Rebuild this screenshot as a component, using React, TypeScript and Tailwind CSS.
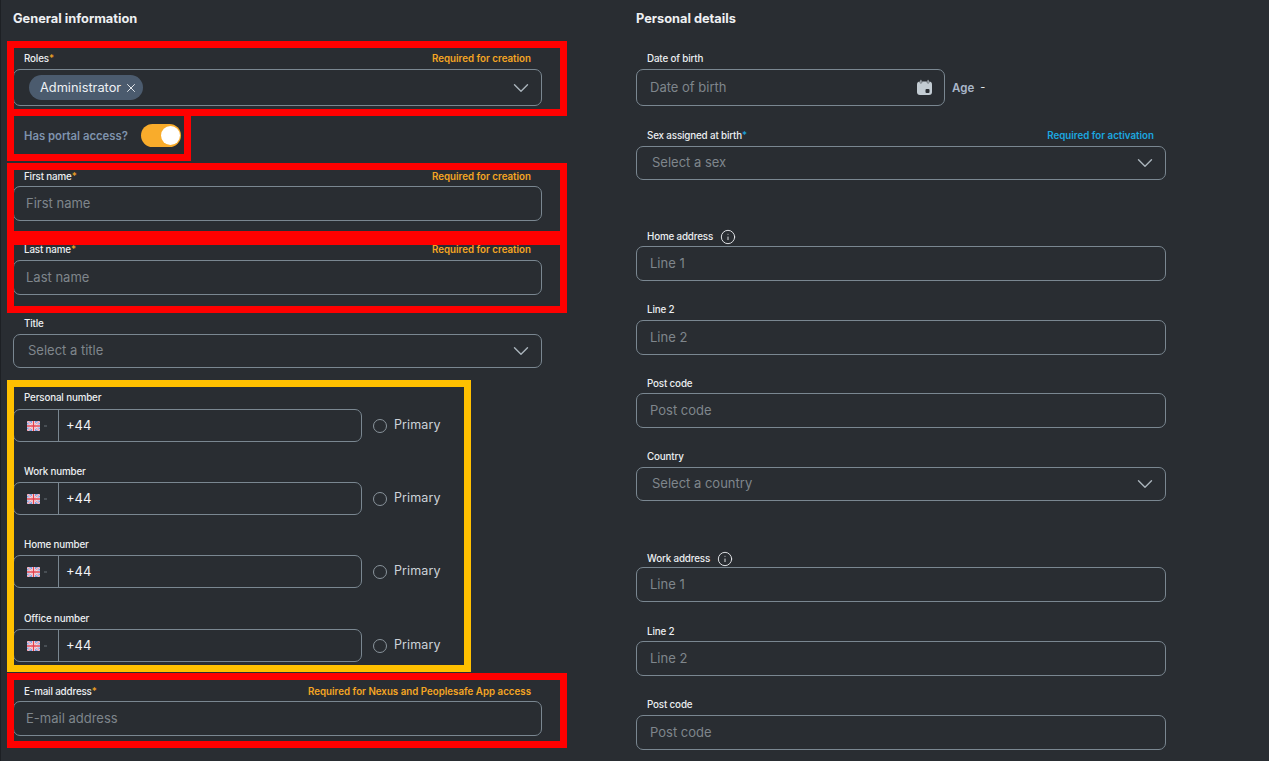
import React from "react";
import { ChevronDown, X, Info } from "lucide-react";

const FONT = "font-['Inter','Roboto',sans-serif]";

function UkFlag() {
  return (
    <svg width="13" height="10" viewBox="0 0 26 20" className="block">
      <rect width="26" height="20" fill="#7f9de0" />
      <path d="M0 0L26 20M26 0L0 20" stroke="#f6e4ea" strokeWidth="4" />
      <path d="M0 0L26 20M26 0L0 20" stroke="#e0667a" strokeWidth="1.5" />
      <path d="M13 0V20M0 10H26" stroke="#fbf0f2" strokeWidth="6" />
      <path d="M13 0V20M0 10H26" stroke="#e2404f" strokeWidth="3" />
    </svg>
  );
}

function Label({
  text,
  star,
  hint,
  hintColor = "orange",
  icon,
  shift = "",
  right,
}: {
  text: string;
  star?: "orange" | "blue";
  hint?: string;
  hintColor?: "orange" | "blue";
  icon?: boolean;
  shift?: string;
  right?: boolean;
}) {
  return (
    <div className={`flex h-4 items-center justify-between pl-[11px] mb-[3px] ${right ? "pr-[12px]" : "pr-[11px]"} ${shift}`}>
      <span className="translate-y-px flex items-center text-[9.8px] leading-4 font-medium text-[#eceff1] tracking-[-0.15px]">
        {text}
        {star === "orange" && <span className="text-[#f5a623]">*</span>}
        {star === "blue" && <span className="text-[#1ba8e0]">*</span>}
        {icon && <Info className="ml-[7px] w-[16px] h-[16px] text-[#e8ebee]" strokeWidth={1.4} />}
      </span>
      {hint && (
        <span
          className={
            hintColor === "orange"
              ? "translate-y-px text-[9.75px] leading-4 font-semibold text-[#f5a623]"
              : "translate-y-px text-[9.75px] leading-4 font-semibold text-[#1ba8e0]"
          }
        >
          {hint}
        </span>
      )}
    </div>
  );
}

function Input({ placeholder, left }: { placeholder: string; left?: boolean }) {
  return (
    <div
      className={`h-[35px] rounded-[7px] border border-[#7a8791] flex items-center text-[13px] text-[#7f868c] ${left ? "pl-[12px]" : "pl-[13px]"}`}
    >
      {placeholder}
    </div>
  );
}

function Select({ placeholder, left }: { placeholder: string; left?: boolean }) {
  return (
    <div
      className={`h-[34px] rounded-[7px] border border-[#7a8791] flex items-center justify-between pr-[7px] text-[13px] text-[#7f868c] ${left ? "pl-[14px]" : "pl-[15px]"}`}
    >
      {placeholder}
      <ChevronDown className="w-[26px] h-[26px] text-[#aab4bc]" strokeWidth={1.3} />
    </div>
  );
}

function Phone({ label, mt, shift }: { label: string; mt: string; shift?: string }) {
  return (
    <div className={mt}>
      <Label text={label} shift={shift} />
      <div className="flex items-center">
        <div className="h-[33px] w-[349px] rounded-[7px] border border-[#7a8791] flex items-center">
          <div className="w-[45px] h-full border-r border-[#7a8791] flex items-center pl-[13px] gap-[4px]">
            <UkFlag />
            <span className="w-[3px] h-[2px] bg-[#484e54]" />
          </div>
          <span className="pl-[7px] text-[13px] text-[#f2f4f6]">+44</span>
        </div>
        <span className="ml-[11px] w-[14px] h-[14px] rounded-full border border-[#8a949c]" />
        <span className="ml-[7px] text-[12.5px] text-[#cdd3d9] tracking-[0.1px]">Primary</span>
      </div>
    </div>
  );
}

function Calendar() {
  return (
    <svg width="17" height="17" viewBox="0 0 17 17" className="block">
      <rect x="1" y="2.5" width="15" height="13.5" rx="3" fill="#c3ccd3" />
      <rect x="4" y="0.8" width="1.8" height="3.5" rx="0.9" fill="#c3ccd3" stroke="#292d32" strokeWidth="0.5" />
      <rect x="11.2" y="0.8" width="1.8" height="3.5" rx="0.9" fill="#c3ccd3" stroke="#292d32" strokeWidth="0.5" />
      <rect x="9.5" y="10" width="4" height="4" rx="1" fill="#292d32" />
    </svg>
  );
}

export default function App() {
  return (
    <div
      className={`${FONT} relative w-[1269px] h-[761px] overflow-hidden bg-[#292d32] border-l border-[#1d2024]`}
    >
      <div className="flex">
        {/* Left column */}
        <div className="ml-[12px] w-[529px] pt-[10px]">
          <h2 className="h-4 translate-y-[1px] flex items-center text-[12.8px] font-bold text-[#eef0f2]">General information</h2>

          <div className="mt-[24px]">
            <Label text="Roles" star="orange" hint="Required for creation" />
            <div className="h-[37px] rounded-[7px] border border-[#7a8791] flex items-center justify-between pl-[15px] pr-[7px]">
              <span className="h-[25px] rounded-full bg-[#4b5b6e] flex items-center pl-[11px] pr-[5px] text-[12.8px] text-[#eef1f4]">
                Administrator
                <X className="ml-[3px] w-[14px] h-[14px]" strokeWidth={1.6} />
              </span>
              <ChevronDown className="w-[26px] h-[26px] text-[#aab4bc]" strokeWidth={1.3} />
            </div>
          </div>

          <div className="mt-[17px] h-6 flex items-center pl-[11px]">
            <span className="translate-y-px text-[11.3px] font-semibold text-[#7f93ad]">Has portal access?</span>
            <span className="ml-[13px] w-[40px] h-[23px] rounded-full bg-[#f9ac2b] flex items-center justify-end pr-[1px]">
              <span className="w-[19px] h-[19px] rounded-full bg-white" />
            </span>
          </div>

          <div className="mt-[20px]">
            <Label text="First name" star="orange" hint="Required for creation" shift="translate-y-px" />
            <Input placeholder="First name" left />
          </div>
          <div className="mt-[20px]">
            <Label text="Last name" star="orange" hint="Required for creation" />
            <Input placeholder="Last name" left />
          </div>
          <div className="mt-[20px]">
            <Label text="Title" />
            <Select placeholder="Select a title" left />
          </div>

          <Phone label="Personal number" mt="mt-[22px]" shift="-translate-y-px" />
          <Phone label="Work number" mt="mt-[21px]" />
          <Phone label="Home number" mt="mt-[21px]" />
          <Phone label="Office number" mt="mt-[22px]" />

          <div className="mt-[20px]">
            <Label text="E-mail address" star="orange" hint="Required for Nexus and Peoplesafe App access" shift="translate-y-px" />
            <Input placeholder="E-mail address" left />
          </div>
        </div>

        {/* Right column */}
        <div className="ml-[94px] w-[530px] pt-[10px]">
          <h2 className="h-4 translate-y-[1px] flex items-center text-[12.8px] font-bold text-[#eef0f2]">Personal details</h2>

          <div className="mt-[24px]">
            <Label text="Date of birth" right />
            <div className="flex items-center">
              <div className="h-[37px] w-[309px] rounded-[7px] border border-[#7a8791] flex items-center justify-between pl-[13px] pr-[11px] text-[13px] text-[#7f868c]">
                Date of birth
                <Calendar />
              </div>
              <span className="ml-[7px] translate-y-px text-[11.5px] font-semibold text-[#a9b7c9]">Age</span>
              <span className="ml-[6px] text-[11px] text-[#e8ebee]">-</span>
            </div>
          </div>
          <div className="mt-[21px]">
            <Label text="Sex assigned at birth" star="blue" hint="Required for activation" hintColor="blue" right />
            <Select placeholder="Select a sex" />
          </div>

          <div className="mt-[47px]">
            <Label text="Home address" icon right shift="translate-y-px" />
            <Input placeholder="Line 1" />
          </div>
          <div className="mt-[20px]">
            <Label text="Line 2" right />
            <Input placeholder="Line 2" />
          </div>
          <div className="mt-[19px]">
            <Label text="Post code" right shift="translate-y-px" />
            <Input placeholder="Post code" />
          </div>
          <div className="mt-[20px]">
            <Label text="Country" right />
            <Select placeholder="Select a country" />
          </div>

          <div className="mt-[47px]">
            <Label text="Work address" icon right shift="translate-y-[2px]" />
            <Input placeholder="Line 1" />
          </div>
          <div className="mt-[20px]">
            <Label text="Line 2" right shift="translate-y-px" />
            <Input placeholder="Line 2" />
          </div>
          <div className="mt-[20px]">
            <Label text="Post code" right />
            <Input placeholder="Post code" />
          </div>
        </div>
      </div>

      {/* Annotation rectangles drawn on top of the screenshot */}
      <div className="absolute left-[6px] top-[109px] w-[184px] h-[52px] border-[7px] border-[#ff0000] pointer-events-none" />
      <div className="absolute left-[6px] top-[41px] w-[560px] h-[75px] border-[7px] border-[#ff0000] pointer-events-none" />
      <div className="absolute left-[6px] top-[163px] w-[560px] h-[75px] border-[7px] border-[#ff0000] pointer-events-none" />
      <div className="absolute left-[6px] top-[238px] w-[560px] h-[75px] border-[7px] border-[#ff0000] pointer-events-none" />
      <div className="absolute left-[6px] top-[380px] w-[464px] h-[292px] border-[7px] border-[#ffc000] pointer-events-none" />
      <div className="absolute left-[6px] top-[673px] w-[560px] h-[75px] border-[7px] border-[#ff0000] pointer-events-none" />
    </div>
  );
}
